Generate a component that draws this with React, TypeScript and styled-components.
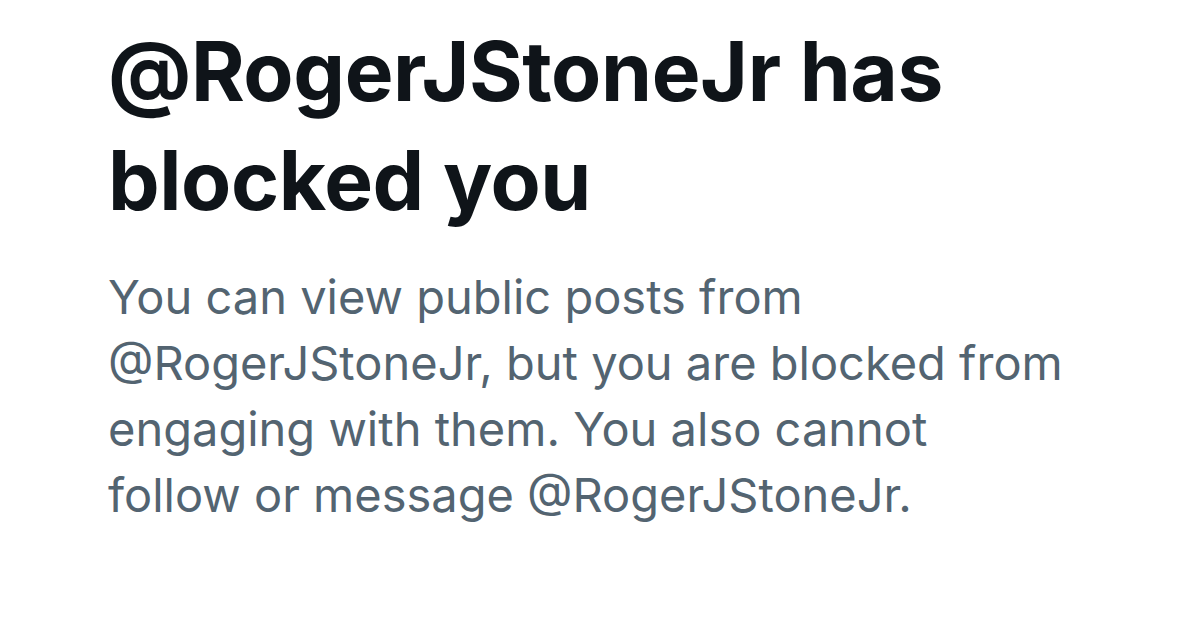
import React from "react";
import styled, { createGlobalStyle } from "styled-components";

const Global = createGlobalStyle`
  html, body { margin: 0; padding: 0; background: #ffffff; }
  body { font-family: Inter, "Noto Sans", sans-serif; }
`;

const Page = styled.main`
  display: flex;
  flex-direction: column;
  padding: 17px 40px 0 108px;
  width: 1200px;
  height: 617px;
  box-sizing: border-box;
`;

const Title = styled.h1`
  margin: 0;
  font-size: 82px;
  line-height: 109px;
  font-weight: 700;
  color: #0f1419;
  letter-spacing: -0.4px;
  max-width: 900px;
`;

const Body = styled.p`
  margin: 29px 0 0;
  font-size: 47px;
  line-height: 66px;
  font-weight: 400;
  color: #536471;
  max-width: 958px;
`;

export default function App() {
  return (
    <>
      <Global />
      <Page>
        <Title>@RogerJStoneJr has blocked you</Title>
        <Body>
          You can view public posts from @RogerJStoneJr, but you are blocked
          from engaging with them. You also cannot follow or message
          @RogerJStoneJr.
        </Body>
      </Page>
    </>
  );
}
